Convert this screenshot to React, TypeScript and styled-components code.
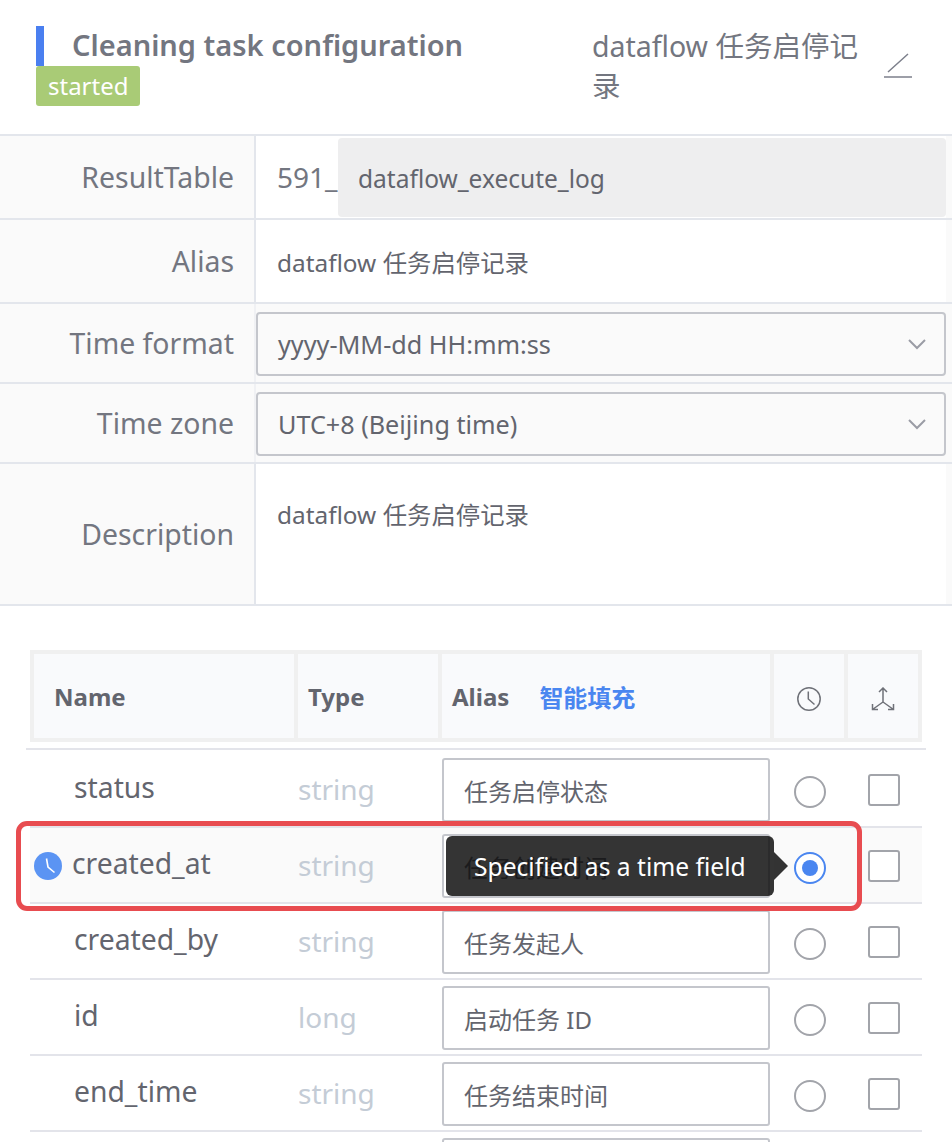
import React from "react";
import styled, { createGlobalStyle } from "styled-components";

const GlobalStyle = createGlobalStyle`
  html, body {
    margin: 0;
    padding: 0;
    background: #fff;
    overflow: hidden;
    font-family: "Noto Sans", "Noto Sans CJK SC", sans-serif;
  }
  * { box-sizing: border-box; }
`;

const Page = styled.div`
  width: 952px;
  height: 1142px;
  overflow: hidden;
`;

const Header = styled.div`
  display: flex;
  justify-content: space-between;
  height: 134px;
  padding: 26px 36px 0;
`;
const TitleBlock = styled.div`
  display: flex;
  flex-direction: column;
  align-items: flex-start;
`;
const Title = styled.div`
  border-left: 8px solid #4a7ff0;
  height: 40px;
  padding-left: 28px;
  font-size: 29px;
  line-height: 38px;
  font-weight: 600;
  color: #737680;
  white-space: nowrap;
`;
const Badge = styled.span`
  background: #a9cb76;
  color: #fff;
  font-size: 24px;
  line-height: 40px;
  height: 40px;
  padding: 0 11px 0 12px;
  border-radius: 3px;
`;
const HeaderRight = styled.div`
  display: flex;
  width: 324px;
`;
const HeaderName = styled.div`
  width: 278px;
  font-size: 28.5px;
  line-height: 40px;
  color: #737680;
`;
const EditIcon = styled.svg`
  width: 30px;
  height: 30px;
  margin: 24px 0 0 14px;
  color: #7d808c;
`;

const Form = styled.div`
  border-top: 2px solid #e3e6ec;
`;
const FormRow = styled.div<{ $h: number }>`
  display: flex;
  height: ${(p) => p.$h}px;
  border-bottom: 2px solid #e3e6ec;
  background: #fafafa;
`;
const FormLabel = styled.div<{ $soft?: boolean }>`
  width: 256px;
  flex: none;
  display: flex;
  align-items: center;
  justify-content: flex-end;
  padding-right: 20px;
  border-right: 2px solid ${(p) => (p.$soft ? "#f0f1f4" : "#e3e6ec")};
  font-size: 28.4px;
  color: #737680;
`;
const FormValue = styled.div<{ $top?: boolean }>`
  flex: 1;
  display: flex;
  align-items: ${(p) => (p.$top ? "flex-start" : "center")};
  margin-right: 6px;
  padding-left: 21px;
  padding-top: ${(p) => (p.$top ? "32px" : "0")};
  background: #fff;
  font-size: 24.4px;
  color: #63656e;
`;
const Prefix = styled.span`
  font-size: 28px;
  color: #737680;
  width: 61px;
  flex: none;
`;
const Disabled = styled.div`
  margin-top: 1px;
  flex: 1;
  height: 79px;
  display: flex;
  align-items: center;
  padding: 2px 0 0 20px;
  background: #eeeeef;
  border-radius: 4px;
  font-size: 24.5px;
`;
const SelectCell = styled.div`
  flex: 1;
  display: flex;
  align-items: center;
`;
const SelectValue = styled.div`
  flex: 1;
  height: 64px;
  margin: 2px 6px 0 0;
  display: flex;
  align-items: center;
  justify-content: space-between;
  padding: 0 17px 0 20px;
  background: #fafafa;
  border: 2px solid #c4c6cc;
  border-radius: 4px;
  font-size: 25.2px;
  color: #63656e;
`;
const Chevron = styled.svg`
  width: 20px;
  height: 12px;
  color: #9a9ca5;
`;

const FieldTable = styled.div`
  position: relative;
  width: 892px;
  margin: 44px 0 0 30px;
`;
const HeadRow = styled.div`
  display: grid;
  grid-template-columns: 260px 140px 328px 70px 70px;
  gap: 4px;
  height: 92px;
  padding: 4px;
  background: #f0f0f0;
`;
const HeadLine = styled.div`
  height: 2px;
  margin: 6px -4px 0;
  background: #e3e4ea;
`;
const HeadCell = styled.div<{ $pad?: number }>`
  display: flex;
  align-items: center;
  gap: 30px;
  background: #f9fafc;
  padding-left: ${(p) => p.$pad ?? 10}px;
  font-size: 24px;
  font-weight: 700;
  color: #63656e;
`;
const HeadIcon = styled(HeadCell)`
  justify-content: center;
  padding: 6px 0 0;
  color: #6f7178;
`;
const Smart = styled.span`
  color: #4a86f0;
`;
const Rows = styled.div`
  & > :first-child {
    height: 78px;
    padding-top: 4px;
  }
`;
const Row = styled.div<{ $active?: boolean }>`
  display: grid;
  grid-template-columns: 260px 140px 328px 70px 70px;
  gap: 4px;
  align-items: center;
  height: 76px;
  padding: 2px 0 0 4px;
  border-bottom: 2px solid #e3e4ea;
  background: ${(p) => (p.$active ? "#fafafa" : "#fff")};
`;
const NameCell = styled.div<{ $active?: boolean }>`
  display: flex;
  align-items: center;
  gap: 10px;
  padding-left: ${(p) => (p.$active ? "0" : "40px")};
  font-size: 28.3px;
  color: #63656e;
`;
const NameText = styled.span`
  padding-bottom: 6px;
`;
const ActiveClock = styled.svg`
  width: 28px;
  height: 28px;
  flex: none;
`;
const TypeCell = styled.div`
  padding-bottom: 2px;
  font-size: 28px;
  color: #c4ccd6;
`;
const AliasBox = styled.div`
  height: 64px;
  display: flex;
  align-items: center;
  padding-left: 20px;
  background: #fff;
  border: 2px solid #c4c6cc;
  border-radius: 3px;
  font-size: 24px;
  color: #63656e;
`;
const Radio = styled.span<{ $on?: boolean }>`
  justify-self: center;
  width: 32px;
  height: 32px;
  margin: 4px 0 0 2px;
  border-radius: 50%;
  border: 2px solid ${(p) => (p.$on ? "#4a86f0" : "#a2a4aa")};
  background: #fff;
  display: flex;
  align-items: center;
  justify-content: center;
  &::after {
    content: "";
    display: ${(p) => (p.$on ? "block" : "none")};
    width: 16px;
    height: 16px;
    border-radius: 50%;
    background: #4a86f0;
  }
`;
const Check = styled.span`
  justify-self: center;
  width: 32px;
  height: 32px;
  margin-left: 2px;
  border-radius: 3px;
  border: 2px solid #a2a4aa;
  background: #fff;
`;
const Highlight = styled.div`
  position: absolute;
  left: -14px;
  top: 171px;
  width: 846px;
  height: 90px;
  border: 5px solid #e84c50;
  border-radius: 11px;
  pointer-events: none;
`;
const Tooltip = styled.div`
  position: absolute;
  left: 416px;
  top: 186px;
  width: 328px;
  height: 60px;
  display: flex;
  align-items: center;
  padding-left: 28px;
  background: rgba(13, 13, 13, 0.84);
  border-radius: 6px;
  color: #fff;
  font-size: 24.6px;
  white-space: nowrap;
  &::after {
    content: "";
    position: absolute;
    right: -14px;
    top: 50%;
    margin-top: -14px;
    border-left: 14px solid #333;
    border-top: 14px solid transparent;
    border-bottom: 14px solid transparent;
  }
`;

type Field = { name: string; type: string; alias: string; time?: boolean };

// last row only shows the top of its input before the page ends
const fields: Field[] = [
  { name: "status", type: "string", alias: "任务启停状态" },
  { name: "created_at", type: "string", alias: "任务创建时间", time: true },
  { name: "created_by", type: "string", alias: "任务发起人" },
  { name: "id", type: "long", alias: "启动任务 ID" },
  { name: "end_time", type: "string", alias: "任务结束时间" },
  { name: "", type: "", alias: "" },
];

const Arrow = () => (
  <Chevron viewBox="0 0 20 12" fill="none" stroke="currentColor" strokeWidth="2">
    <path d="M2 2l8 8 8-8" />
  </Chevron>
);

export default function App() {
  return (
    <Page>
      <GlobalStyle />
      <Header>
        <TitleBlock>
          <Title>Cleaning task configuration</Title>
          <Badge>started</Badge>
        </TitleBlock>
        <HeaderRight>
          <HeaderName>dataflow 任务启停记录</HeaderName>
          <EditIcon viewBox="0 0 30 30" fill="none" stroke="currentColor" strokeWidth="1.5">
            <path d="M0 27h28M4 22L24 4" />
          </EditIcon>
        </HeaderRight>
      </Header>
      <Form>
        <FormRow $h={84}>
          <FormLabel>ResultTable</FormLabel>
          <FormValue>
            <Prefix>591_</Prefix>
            <Disabled>dataflow_execute_log</Disabled>
          </FormValue>
        </FormRow>
        <FormRow $h={84}>
          <FormLabel>Alias</FormLabel>
          <FormValue>dataflow 任务启停记录</FormValue>
        </FormRow>
        <FormRow $h={80}>
          <FormLabel $soft>Time format</FormLabel>
          <SelectCell>
            <SelectValue>
              yyyy-MM-dd HH:mm:ss
              <Arrow />
            </SelectValue>
          </SelectCell>
        </FormRow>
        <FormRow $h={80}>
          <FormLabel $soft>Time zone</FormLabel>
          <SelectCell>
            <SelectValue>
              UTC+8 (Beijing time)
              <Arrow />
            </SelectValue>
          </SelectCell>
        </FormRow>
        <FormRow $h={142}>
          <FormLabel>Description</FormLabel>
          <FormValue $top>dataflow 任务启停记录</FormValue>
        </FormRow>
      </Form>
      <FieldTable>
        <HeadRow>
          <HeadCell $pad={20}>Name</HeadCell>
          <HeadCell>Type</HeadCell>
          <HeadCell>
            Alias <Smart>智能填充</Smart>
          </HeadCell>
          <HeadIcon>
            <svg width="24" height="24" viewBox="0 0 24 24" fill="none" stroke="currentColor" strokeWidth="1.5">
              <circle cx="12" cy="12" r="11.2" />
              <path d="M11.3 4.6V12l6.2 5.5" />
            </svg>
          </HeadIcon>
          <HeadIcon>
            <svg width="24" height="24" viewBox="0 0 24 24" fill="none" stroke="currentColor" strokeWidth="1.5">
              <path d="M12 1v14M12 15L1.5 22.5M12 15l10.5 7.5M8 5l4-4 4 4M1.5 17v5.5H7M22.5 17v5.5H17" />
            </svg>
          </HeadIcon>
        </HeadRow>
        <HeadLine />
        <Rows>
          {fields.map((f) => (
            <Row key={f.name} $active={f.time}>
              <NameCell $active={f.time}>
                {f.time && (
                  <ActiveClock viewBox="0 0 28 28">
                    <circle cx="14" cy="14" r="14" fill="#5b94f3" />
                    <path d="M12.5 6.5L14 15l6.5 5.5" fill="none" stroke="#fff" strokeWidth="1.6" />
                  </ActiveClock>
                )}
                <NameText>{f.name}</NameText>
              </NameCell>
              <TypeCell>{f.type}</TypeCell>
              <AliasBox>{f.alias}</AliasBox>
              <Radio $on={f.time} />
              <Check />
            </Row>
          ))}
        </Rows>
        <Highlight />
        <Tooltip>Specified as a time field</Tooltip>
      </FieldTable>
    </Page>
  );
}
